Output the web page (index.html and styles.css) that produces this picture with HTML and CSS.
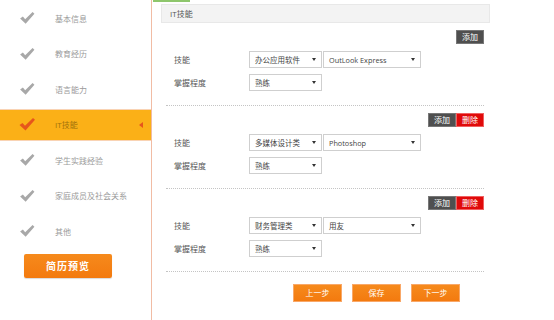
FILE: index.html
```html
<!DOCTYPE html>
<html lang="zh-CN">
<head>
    <meta charset="UTF-8">
    <link rel="stylesheet" href="styles.css">
    <title>IT技能</title>
</head>
<body>
<div class="page">
    <!-- 左侧步骤导航 -->
    <div class="side">
        <ul class="steps">
            <li class="step"><svg class="check" viewBox="0 0 16 13"><polygon points="0,7 3,5 5.5,7.8 13.5,0 15.5,1.8 6,12.6"/></svg><span>基本信息</span></li>
            <li class="step"><svg class="check" viewBox="0 0 16 13"><polygon points="0,7 3,5 5.5,7.8 13.5,0 15.5,1.8 6,12.6"/></svg><span>教育经历</span></li>
            <li class="step"><svg class="check" viewBox="0 0 16 13"><polygon points="0,7 3,5 5.5,7.8 13.5,0 15.5,1.8 6,12.6"/></svg><span>语言能力</span></li>
            <li class="step active"><svg class="check" viewBox="0 0 16 13"><polygon points="0,7 3,5 5.5,7.8 13.5,0 15.5,1.8 6,12.6"/></svg><span>IT技能</span><i class="arrow"></i></li>
            <li class="step"><svg class="check" viewBox="0 0 16 13"><polygon points="0,7 3,5 5.5,7.8 13.5,0 15.5,1.8 6,12.6"/></svg><span>学生实践经验</span></li>
            <li class="step"><svg class="check" viewBox="0 0 16 13"><polygon points="0,7 3,5 5.5,7.8 13.5,0 15.5,1.8 6,12.6"/></svg><span>家庭成员及社会关系</span></li>
            <li class="step"><svg class="check" viewBox="0 0 16 13"><polygon points="0,7 3,5 5.5,7.8 13.5,0 15.5,1.8 6,12.6"/></svg><span>其他</span></li>
        </ul>
        <a class="preview" href="#">简历预览</a>
    </div>

    <!-- 右侧表单 -->
    <div class="main">
        <div class="tab-line"></div>
        <div class="panel-title">IT技能</div>
        <div class="form">
            <div class="block">
                <div class="ops"><a class="btn add" href="#">添加</a></div>
                <div class="row">
                    <span class="label">技能</span>
                    <div class="sel w1"><span>办公应用软件</span><i class="caret"></i></div>
                    <div class="sel w2"><span class="latin">OutLook Express</span><i class="caret"></i></div>
                </div>
                <div class="row">
                    <span class="label">掌握程度</span>
                    <div class="sel w1"><span>熟练</span><i class="caret"></i></div>
                </div>
            </div>

            <div class="block">
                <div class="ops"><a class="btn add" href="#">添加</a><a class="btn del" href="#">删除</a></div>
                <div class="row">
                    <span class="label">技能</span>
                    <div class="sel w1"><span>多媒体设计类</span><i class="caret"></i></div>
                    <div class="sel w2"><span class="latin">Photoshop</span><i class="caret"></i></div>
                </div>
                <div class="row">
                    <span class="label">掌握程度</span>
                    <div class="sel w1"><span>熟练</span><i class="caret"></i></div>
                </div>
            </div>

            <div class="block">
                <div class="ops"><a class="btn add" href="#">添加</a><a class="btn del" href="#">删除</a></div>
                <div class="row">
                    <span class="label">技能</span>
                    <div class="sel w1"><span>财务管理类</span><i class="caret"></i></div>
                    <div class="sel w2"><span>用友</span><i class="caret"></i></div>
                </div>
                <div class="row">
                    <span class="label">掌握程度</span>
                    <div class="sel w1"><span>熟练</span><i class="caret"></i></div>
                </div>
            </div>

            <div class="actions">
                <a class="step-btn" href="#">上一步</a>
                <a class="step-btn" href="#">保存</a>
                <a class="step-btn" href="#">下一步</a>
            </div>
        </div>
    </div>
</div>
</body>
</html>
```

FILE: styles.css
```css
* {
    margin: 0;
    padding: 0;
    box-sizing: border-box;
}

body {
    font-family: "Open Sans", "Noto Sans CJK SC", sans-serif;
    background: #fff;
    color: #555;
}

a {
    text-decoration: none;
}

.page {
    display: flex;
    width: 554px;
    height: 320px;
    overflow: hidden;
}

/* 左侧 */
.side {
    width: 152px;
    height: 320px;
    border-right: 1px solid #f1bca4;
    flex-shrink: 0;
}

.steps {
    list-style: none;
    padding-top: 2px;
}

.step {
    display: flex;
    align-items: center;
    height: 32px;
    margin-bottom: 3.5px;
    padding-left: 20px;
    border-top: 1px solid transparent;
    border-bottom: 1px solid transparent;
    font-size: 8px;
    color: #9a9a9a;
}

.check {
    width: 15px;
    height: 12px;
    margin-right: 20px;
    fill: #a8a8a8;
}

.step.active {
    background: #fbb017;
    border-color: #f9d3b4;
    color: #a0700c;
}

.step.active .check {
    width: 17px;
    height: 13px;
    margin-left: -1px;
    margin-right: 19px;
    fill: #e6561c;
}

.arrow {
    margin-left: auto;
    margin-right: 8px;
    width: 0;
    height: 0;
    border-top: 3px solid transparent;
    border-bottom: 3px solid transparent;
    border-right: 4px solid #e6561c;
}

.preview {
    display: block;
    width: 88px;
    height: 24px;
    margin: 7px 0 0 24px;
    line-height: 24px;
    text-align: center;
    color: #fff;
    font-size: 10px;
    font-weight: bold;
    letter-spacing: 1px;
    border-radius: 2px;
    background: linear-gradient(#f68a1c, #f37a0f);
    box-shadow: 0 1px 1px rgba(0, 0, 0, 0.15);
}

/* 右侧 */
.main {
    flex: 1;
    padding-left: 9px;
}

.tab-line {
    width: 37px;
    height: 2px;
    margin-left: -8px;
    background: #8ec66c;
}

.panel-title {
    width: 329px;
    height: 19px;
    margin-top: 2px;
    padding-left: 8px;
    line-height: 17px;
    font-size: 8px;
    color: #555;
    background: #f3f3f3;
    border: 1px solid #e8e8e8;
}

.form {
    width: 318px;
    margin-left: 5px;
}

.block {
    padding: 7px 0 14px;
    border-bottom: 1px dotted #c4c4c4;
}

.ops {
    display: flex;
    justify-content: flex-end;
    height: 14px;
    margin-bottom: 7px;
}

.btn {
    display: block;
    width: 28px;
    height: 14px;
    line-height: 12px;
    text-align: center;
    font-size: 8px;
    color: #fff;
}

.btn.add {
    background: #4f4f4f;
    border: 1px solid #777;
}

.btn.del {
    background: #e00a0a;
    border: 1px solid #f06060;
}

.row {
    display: flex;
    align-items: center;
    height: 17px;
    padding-left: 8px;
}

.row + .row {
    margin-top: 6px;
}

.label {
    width: 75px;
    font-size: 8px;
    color: #555;
}

.sel {
    display: flex;
    align-items: center;
    height: 17px;
    padding: 0 5px;
    border: 1px solid #cfcfcf;
    background: #fff;
    font-size: 7.5px;
    color: #444;
}

.sel.w1 {
    width: 73px;
}

.sel.w2 {
    width: 98px;
    margin-left: 1px;
}

.sel .latin {
    font-size: 7.3px;
}

.caret {
    margin-left: auto;
    width: 0;
    height: 0;
    border-left: 2px solid transparent;
    border-right: 2px solid transparent;
    border-top: 3px solid #333;
}

.actions {
    display: flex;
    gap: 10px;
    margin: 12px 0 0 127px;
}

.step-btn {
    display: block;
    width: 49px;
    height: 18px;
    line-height: 16px;
    text-align: center;
    font-size: 8px;
    color: #fff;
    background: linear-gradient(#f68a1c, #f37a0f);
    border: 1px solid #f9a868;
}
```
